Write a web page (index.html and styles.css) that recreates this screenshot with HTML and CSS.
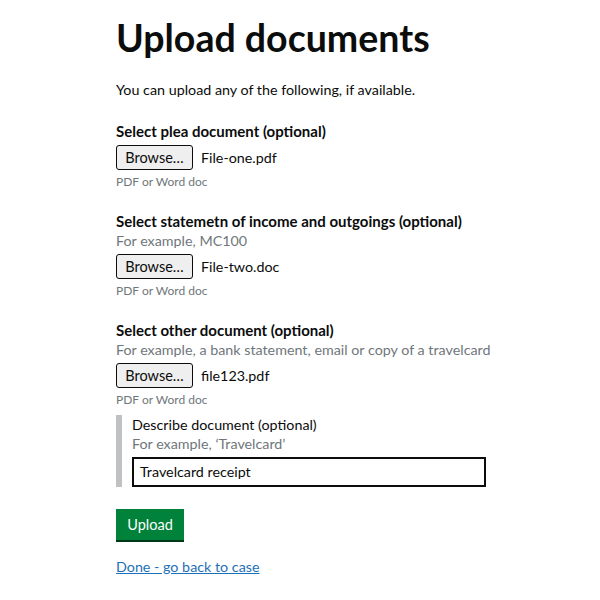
FILE: index.html
```html
<!DOCTYPE html>
<html lang="en">
<head>
<meta charset="utf-8">
<title>Upload documents</title>
<link rel="stylesheet" href="styles.css">
</head>
<body>
<main class="page">
  <h1 class="title">Upload documents</h1>
  <p class="intro">You can upload any of the following, if available.</p>

  <div class="group">
    <div class="label">Select plea document (optional)</div>
    <div class="file">
      <button class="browse" type="button">Browse…</button>
      <span class="filename">File-one.pdf</span>
    </div>
    <div class="caption">PDF or Word doc</div>
  </div>

  <div class="group">
    <div class="label">Select statemetn of income and outgoings (optional)</div>
    <div class="hint">For example, MC100</div>
    <div class="file">
      <button class="browse" type="button">Browse…</button>
      <span class="filename">File-two.doc</span>
    </div>
    <div class="caption">PDF or Word doc</div>
  </div>

  <div class="group">
    <div class="label">Select other document (optional)</div>
    <div class="hint">For example, a bank statement, email or copy of a travelcard</div>
    <div class="file">
      <button class="browse" type="button">Browse…</button>
      <span class="filename">file123.pdf</span>
    </div>
    <div class="caption">PDF or Word doc</div>
    <div class="inset">
      <div class="inset-label">Describe document (optional)</div>
      <div class="hint">For example, ‘Travelcard’</div>
      <div class="input">Travelcard receipt</div>
    </div>
  </div>

  <button class="upload" type="button">Upload</button>
  <a class="back" href="#">Done - go back to case</a>
</main>
</body>
</html>
```
FILE: styles.css
```css
html, body {
  margin: 0;
  padding: 0;
  background: #ffffff;
}
body {
  font-family: Lato, "Liberation Sans", sans-serif;
  color: #0b0c0c;
  font-size: 14.3px;
}
.page {
  padding: 14px 0 0 116px;
  width: 400px;
}
.title {
  font-size: 37.5px;
  font-weight: 700;
  line-height: 48px;
  margin: 0 0 18px;
}
.intro {
  margin: 0 0 23px;
  line-height: 19px;
}
.group {
  margin-bottom: 22px;
}
.label {
  font-size: 15px;
  font-weight: 700;
  line-height: 19px;
  margin-bottom: 4px;
}
.label + .hint {
  margin-top: -4px;
}
.hint {
  color: #6f777b;
  line-height: 19px;
  margin-bottom: 4px;
}
.file {
  display: flex;
  align-items: center;
  gap: 8px;
}
.browse {
  font-family: inherit;
  font-size: 14.5px;
  color: #0b0c0c;
  background: #efefef;
  border: 1px solid #0b0c0c;
  border-radius: 3px;
  height: 25px;
  width: 77px;
  padding: 0;
}
.filename {
  line-height: 19px;
}
.caption {
  color: #6f777b;
  font-size: 12px;
  line-height: 16px;
  margin-top: 4px;
}
.inset {
  margin-top: 7px;
  border-left: 6px solid #bfc1c3;
  padding-left: 10px;
}
.inset-label {
  line-height: 19px;
}
.input {
  margin-top: 1px;
  border: 2px solid #0b0c0c;
  height: 26px;
  line-height: 26px;
  padding: 0 6px;
  width: 338px;
  box-sizing: content-box;
}
.upload {
  display: block;
  font-family: inherit;
  font-size: 14.5px;
  color: #ffffff;
  background: #00823b;
  border: 0;
  border-radius: 0;
  box-shadow: 0 2px 0 #003618;
  height: 31px;
  width: 68px;
  padding: 0;
  margin: 0 0 17px;
}
.back {
  color: #1d70b8;
  line-height: 19px;
  text-decoration: underline;
}
```
